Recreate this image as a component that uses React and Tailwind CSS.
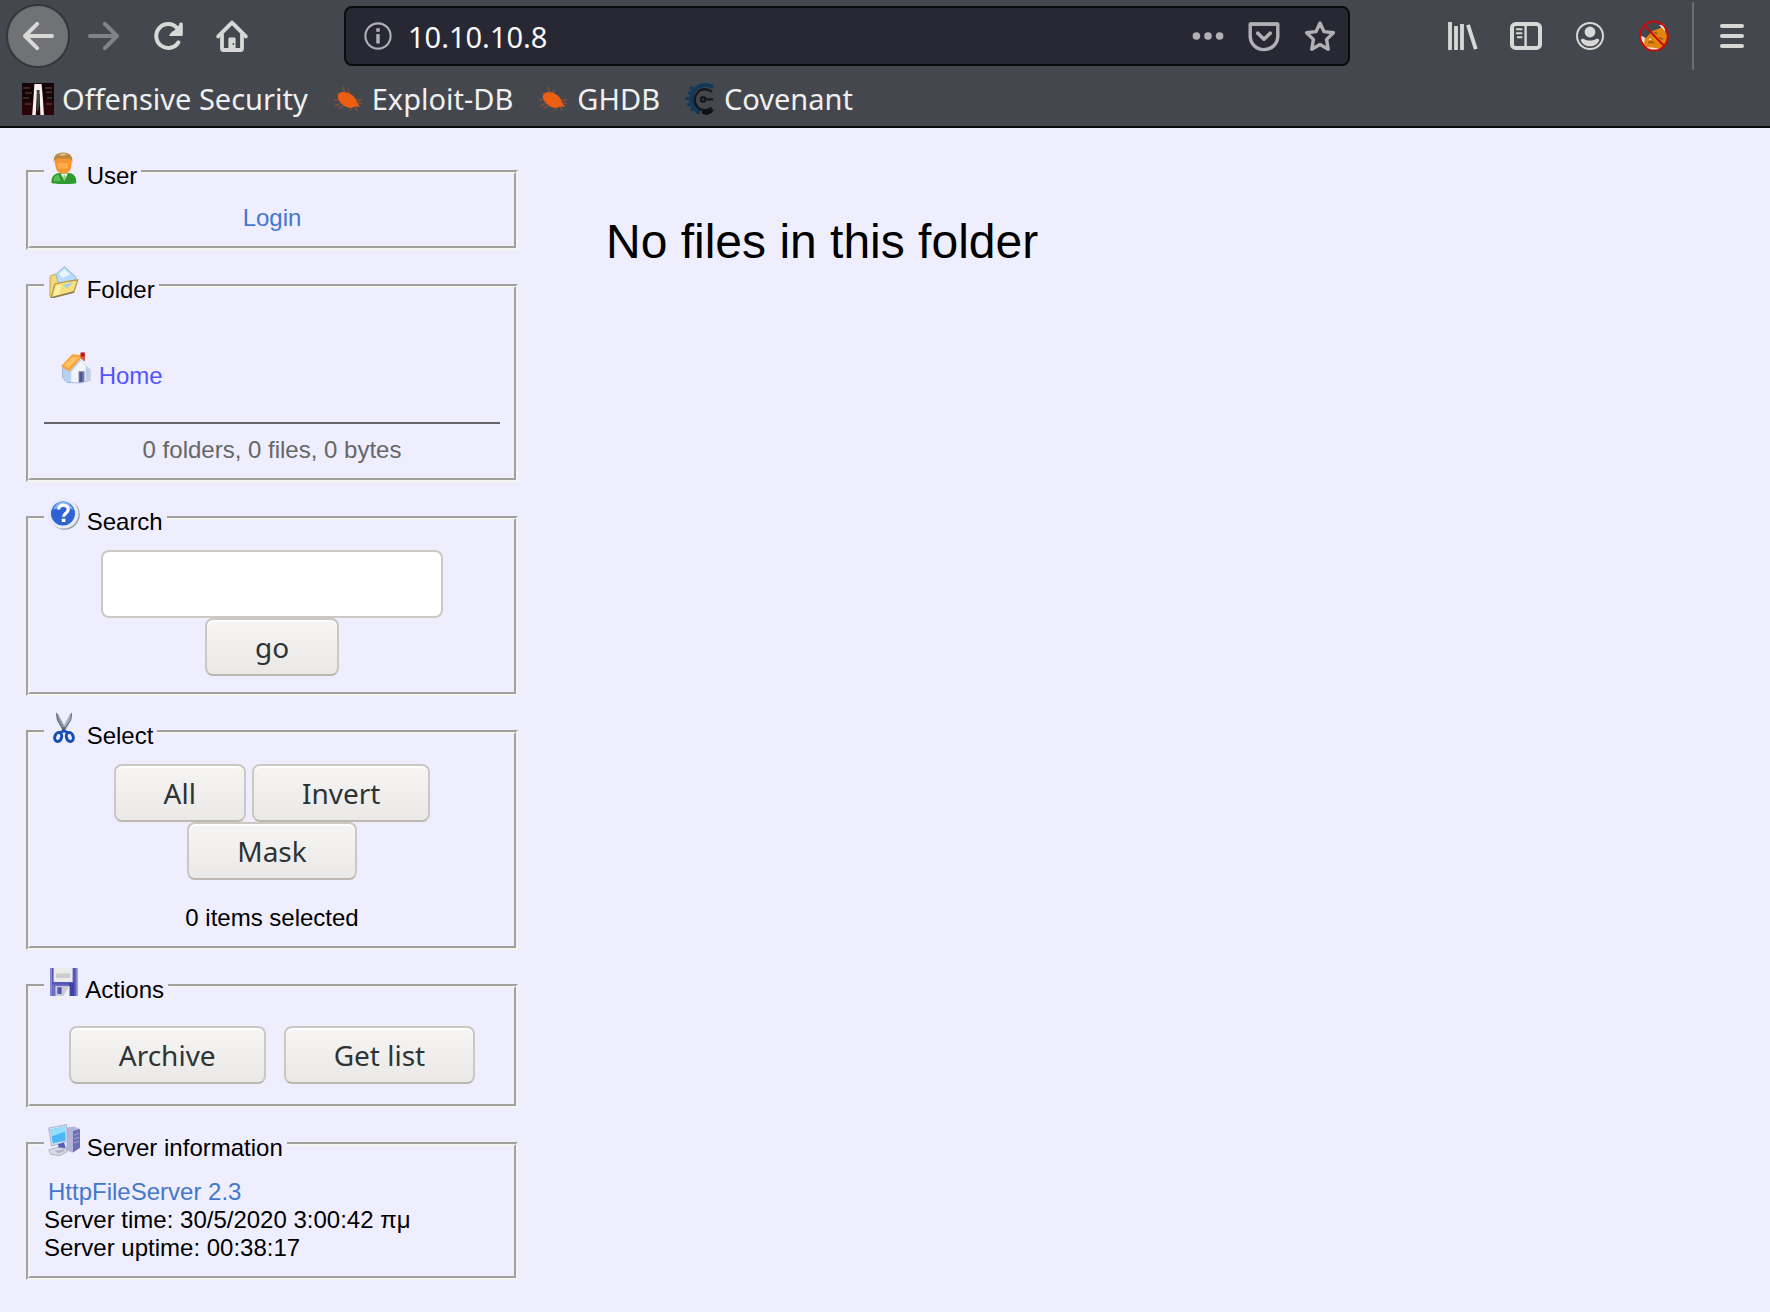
import React from "react";

function Svg({ children, className = "size-8 block shrink-0", box = "0 0 16 16" }) {
  return (
    <svg viewBox={box} className={className} fill="none" aria-hidden="true">
      {children}
    </svg>
  );
}

/* ---------- browser icons ---------- */

const BackArrow = () => (
  <Svg>
    <path d="M7.6 1.9 1.5 8l6.1 6.1M1.8 8H15" stroke="currentColor" strokeWidth="2" strokeLinecap="round" strokeLinejoin="round" />
  </Svg>
);

const ForwardArrow = () => (
  <Svg>
    <path d="M8.4 1.9 14.5 8l-6.1 6.1M14.2 8H1" stroke="currentColor" strokeWidth="2" strokeLinecap="round" strokeLinejoin="round" />
  </Svg>
);

const Reload = () => (
  <Svg>
    <path d="M13.2 11.2A6 6 0 1 1 12.6 4" stroke="currentColor" strokeWidth="2" strokeLinecap="round" />
    <path d="M15 1v6.3a.7.7 0 0 1-.7.7H8.6L15 1Z" fill="currentColor" />
    <path d="M15.4 1.8v5.4a.8.8 0 0 1-.8.8H9.2a.5.5 0 0 1-.4-.8l1.600-1.700 2 .3 1.100-1.100.1-2.900c0-.6 1.800-.6 1.800 0Z" fill="currentColor" />
  </Svg>
);

const HomeIcon = () => (
  <Svg>
    <path d="m1.1 8.2 6.9-6.900 6.900 6.900" stroke="currentColor" strokeWidth="1.900" strokeLinecap="round" strokeLinejoin="round" />
    <path d="M3 7v7.200a.8.8 0 0 0 .8.8h8.400a.8.8 0 0 0 .8-.8V7" stroke="currentColor" strokeWidth="1.900" />
    <path d="M6.200 15V9.400c0-.4.3-.7.7-.7h2.200c.4 0 .7.3.7.7V15Z" fill="currentColor" />
    <circle cx="8.700" cy="12" r=".45" fill="#45474c" />
    <path d="M3.900 15h8.200" stroke="currentColor" strokeWidth="1.600" />
  </Svg>
);

const Info = () => (
  <Svg className="size-7 block shrink-0">
    <circle cx="8" cy="8" r="7.200" stroke="currentColor" strokeWidth="1.200" />
    <rect x="7" y="3.600" width="2" height="2" fill="currentColor" />
    <rect x="7" y="6.900" width="2" height="5.400" fill="currentColor" />
  </Svg>
);

const Dots = () => (
  <Svg>
    <circle cx="2.200" cy="8" r="1.900" fill="currentColor" />
    <circle cx="8" cy="8" r="1.900" fill="currentColor" />
    <circle cx="13.800" cy="8" r="1.900" fill="currentColor" />
  </Svg>
);

const Pocket = () => (
  <Svg>
    <path d="M1.100 2h13.800v6c0 3.900-3.100 6.800-6.900 6.800S1.100 11.900 1.100 8V2Z" stroke="currentColor" strokeWidth="1.700" strokeLinejoin="round" />
    <path d="M1 1.300h14v1.600H1z" fill="currentColor" />
    <path d="M4.900 6.600 8 9.600l3.100-3" stroke="currentColor" strokeWidth="1.800" strokeLinecap="round" strokeLinejoin="round" />
  </Svg>
);

const Star = () => (
  <Svg>
    <path d="m8 1.500 2 4.300 4.700.6-3.400 3.300.8 4.900L8 12.300l-4.100 2.300.8-4.900L1.300 6.400 6 5.800 8 1.500Z" stroke="currentColor" strokeWidth="1.700" strokeLinejoin="round" />
  </Svg>
);

const Library = () => (
  <Svg>
    <path d="M2 1v14M5 3v12M8 2v13" stroke="currentColor" strokeWidth="1.900" />
    <path d="m11 2.400 3.900 12.200" stroke="currentColor" strokeWidth="1.900" />
  </Svg>
);

const Sidebars = () => (
  <Svg>
    <rect x="1" y="2" width="14" height="12" rx="1.800" stroke="currentColor" strokeWidth="2" />
    <path d="M7.800 2v12" stroke="currentColor" strokeWidth="1.200" />
    <path d="M3.400 4.600h2.400M3.400 6.600h2.400M3.900 8.600h1.900" stroke="currentColor" strokeWidth="1" strokeLinecap="round" />
  </Svg>
);

const Account = () => (
  <Svg>
    <circle cx="8" cy="8" r="6.500" stroke="currentColor" strokeWidth="1" />
    <circle cx="8" cy="6" r="2.700" fill="currentColor" />
    <path d="M3.400 10.200c0-.8.900-1 1.500-.7 1.900 1 4.300 1 6.200 0 .6-.3 1.500-.1 1.500.7-.8 1.900-2.500 2.900-4.600 2.900s-3.800-1-4.600-2.900Z" fill="currentColor" />
  </Svg>
);

const FoxBlocked = () => (
  <Svg>
    <path d="M2.200 8.600 4 9l3-3.400 3.600-1.300 2.200-1.500.7 2.700 1.200 2.300.2 2.500-1.600 2.700-3 1.500-4.600.1-2.800-2.200-.7-3.800Z" fill="#e2850f" />
    <path d="m1.500 7.900 1.900.9-.3 3.200L1.500 9.800ZM10.600 2.600l2.400-.7.600 4-1.500-1.900ZM4 13.600l3 .1 4 .7-2.200.9-3.200-.5ZM5.200 9.700l1.300-.6.200 1.200Z" fill="#ebe4e0" />
    <path d="m5.300 11.700 1.200-1 1.500.8M8 6.200l1.800.7M10.600 8.800l1.900.9M11 11.500l1.500.3" stroke="#8f5a12" strokeWidth=".8" />
    <ellipse cx="8" cy="8" rx="6.900" ry="7.300" stroke="#c80a0a" strokeWidth="1" />
    <path d="m3.200 2.800 10 10.300" stroke="#c80a0a" strokeWidth="1" />
  </Svg>
);

const MenuIcon = () => (
  <Svg className="h-8 w-7 block shrink-0" box="0 0 14 16">
    <path d="M2 3h10M2 8h10M2 13h10" stroke="currentColor" strokeWidth="2" strokeLinecap="round" />
  </Svg>
);

/* ---------- bookmark favicons ---------- */

const OffSecIcon = () => (
  <Svg>
    <rect width="16" height="16" fill="#150405" />
    <path d="M0 9h16v7H0z" fill="#2a0506" />
    <path d="M.5 2.500H4M1.500 5H5M11.500 2.500H15M12 4.600h3M.5 7.500h3M12.500 7.500H15M1.500 10.500h3M12 10.500h3" stroke="#4a3536" strokeWidth=".8" />
    <path d="M6.200.5h3.600l.5 5.500.7 10H9.200L8.800 5.500H7.400L6.900 16H5.100l.6-8 .5-7.500Z" fill="#f6f1ee" />
    <path d="M7.300 3.500h1.500v6.800L8.100 14h-.6l.1-5Z" fill="#3e4542" />
  </Svg>
);

const ExploitIcon = () => (
  <Svg>
    <path d="M2.500 5 5 6.300M5.500 2l.8 2.600M1 8.500l3.300-.3M3.500 12.800 6 11M1.300 11.600 4.800 10M9 13.800l1-2M12.600 13.800l-1.200-2.200M15.200 8.300l-3 .3M12.800 9.500l2.200 1M8.300 3.200v2.300" stroke="#84503a" strokeWidth=".7" />
    <path d="M2.900 6.600C3.200 4.700 5.500 4.100 7.600 4.800c2.600.9 4.500 2.600 4.900 5l1.500 2.100-2.500-.1c-1.800 1.100-3.900.7-5.700-.7-1.900-1.400-3-2.900-2.900-4.500Z" fill="#ec5f12" />
  </Svg>
);

const CovenantIcon = () => (
  <Svg>
    <path d="M14.600 2.200C12.600.8 10 .7 7.800 1.700c-2.900 1.300-4.300 4-4.100 7 .2 2.700 1.900 5 4.500 5.900" stroke="#13395a" strokeWidth="2" />
    <path d="M4.500 2.900 3 2.300M3.500 5.200 2 4.900M3 7.800H.6M3.300 10.500l-1.600.7M4.600 12.700l-1.200 1M7 14.500l-.6 1" stroke="#13395a" strokeWidth="1.600" />
    <path d="M13.900 4.400C11.800 2.700 8.800 2.600 7 4.500c-2.200 2.200-2.200 5.500-.2 7.600 1.900 2 4.800 2 7 .3" stroke="#17181d" strokeWidth="1.200" />
    <circle cx="9.600" cy="8.200" r="1.100" stroke="#17181d" strokeWidth="1.200" />
    <path d="M11 8.200h3.600" stroke="#17181d" strokeWidth="1.100" />
    <path d="m9 13.600 4.500-.5 1.500.3-1.300 1.700-2.500 1L9 15.200Z" fill="#101014" />
  </Svg>
);

/* ---------- page icons ---------- */

const inlineIcon = "inline-block size-8 align-baseline";

const UserIcon = () => (
  <Svg className={inlineIcon}>
    <path d="M1.800 15.600c-.3-2.400.6-4.300 3-5l3.200-.4 3.300.4c2.200.6 3.100 2.700 2.800 5-1.500.5-10.600.5-12.300 0Z" fill="#2f9a2f" />
    <path d="M2.800 14c.2-1.500 1-2.400 2.400-2.700l1.300 3.300H3Z" fill="#54c054" />
    <path d="m6.300 10.800 1.900 3.600 1.700-3.600Z" fill="#f2faf0" />
    <path d="M7.800 11.500h.8l.3 1.700-.7 1.400-.7-1.400Z" fill="#8fc98c" />
    <path d="M3.300 5c0-2 1.500-4 4.400-4s4.300 2 4.200 4l-.5 3.300c-.5 1.600-1.900 2.600-3.700 2.600S4.500 9.900 4 8.300L3.300 5Z" fill="#f79630" />
    <path d="M2.900 5.200C2.500 2 4.300.2 7.500.2s5.100 1.800 4.700 5c-.2-1.300-1-2-2.500-2-1.800 0-3 .1-4.300 0-1.500-.1-2.200.7-2.500 2Z" fill="#b98840" />
    <path d="M5.300 1.400c1.200-.9 3.300-.9 4.400-.1-1.300.7-3 .8-4.400.1Z" fill="#e0c08c" />
    <path d="M5 5.500h5v2.800H5z" fill="#ffab4e" />
  </Svg>
);

const FolderIcon = () => (
  <Svg className={inlineIcon}>
    <path d="M1 5.200 3.600 4l1.500.7L12 6.500l-9 9.100-2-.4Z" fill="#f0d878" stroke="#c9ab52" strokeWidth=".5" />
    <path d="M4 4.200 8.200.3l6 5.500L10 10.200 5 8Z" fill="#b9dcfa" stroke="#86b4e6" strokeWidth=".5" />
    <path d="m5.500 4 2.700-2.500L11 4.200 7 6Z" fill="#e8f5ff" />
    <path d="m3.500 9 5.400-1.200 6-.9-2 6.200L1.500 16Z" fill="#f7e07c" stroke="#b1954a" strokeWidth=".6" />
    <path d="m7.500 9.600 5-1.600-3 3.300Z" fill="#9dd0ef" />
    <path d="m4.300 10 2.300-.4-1 4.400-3 .7Z" fill="#fff1a8" />
    <path d="m12.900 13-11.400 3" stroke="#8b7c5c" strokeWidth=".7" />
  </Svg>
);

const HouseIcon = () => (
  <Svg className={inlineIcon}>
    <path d="m1.300 7.600 3.500 1.600 5-5.500 5.200 5.200v5.300l-5 1.300-6.600-.3-2.100-2.400Z" fill="#b5d3f1" stroke="#93abcf" strokeWidth=".4" />
    <path d="m5.600 10 4.900-5.900 4.400 5v5l-4.900 1.300-4.400-.4Z" fill="#f1f5fb" />
    <path d="M12.800 14.600V7l2.100 2.100v5Z" fill="#c0cde6" />
    <path d="M9.300 9.600h2.900v5.300l-2.900.5Z" fill="#6d77a8" />
    <path d="M9.900 10.300h1.100v4.500l-1.100.2Z" fill="#4c5684" />
    <path d="m.5 7.100 5.600-6 5.600.5L4.700 9.700Z" fill="#fba33e" />
    <path d="m2 6.700 4.300-4.500 3.300.3-5.200 5.500Z" fill="#ffbf62" />
    <path d="M10.300.9h2.200v3.800l-2.200-1.500Z" fill="#c9604c" />
    <path d="M10.300.2h2.100v2h-2.100Z" fill="#c2181a" />
  </Svg>
);

const HelpIcon = () => (
  <Svg className={inlineIcon}>
    <circle cx="8.300" cy="8.300" r="7.600" fill="#9a9aa6" />
    <circle cx="7.700" cy="7.700" r="7.600" fill="#e4ebf5" />
    <circle cx="7.500" cy="7.800" r="6" fill="#2f62d2" />
    <path d="M2.500 6C3.500 3 5.500 1.900 7.500 1.900s4.300 1.300 5 4.100C9 4 6 4 2.500 6Z" fill="#7fb2f2" />
    <path d="M5.300 5.800c0-1.500 1.100-2.200 2.400-2.200 1.400 0 2.400.8 2.400 2.100 0 1.900-2.300 1.900-2.300 3.700" stroke="#fff" strokeWidth="1.600" />
    <rect x="6.900" y="10.300" width="1.800" height="1.700" fill="#fff" />
  </Svg>
);

const ScissorsIcon = () => (
  <Svg className={inlineIcon}>
    <path d="m4 .3 1 .8 3.800 7-1.300 1.600L4.600 4.100Z" fill="#8793a3" />
    <path d="m12 .3-1 .8-3.800 7 1.300 1.600 2.900-5.600Z" fill="#a3aebb" />
    <path d="M4.300.6 4.700 4 8 9.500M11.800.6 11.400 4 8.300 8.500" stroke="#5f6b7b" strokeWidth=".5" />
    <path d="M7.900 7.500v2.800" stroke="#56657b" strokeWidth="1.400" />
    <ellipse cx="5.100" cy="12.500" rx="1.700" ry="2.300" transform="rotate(18 5.100 12.500)" stroke="#1450b4" strokeWidth="1.500" />
    <ellipse cx="10.900" cy="12.500" rx="1.700" ry="2.300" transform="rotate(-18 10.900 12.500)" stroke="#1450b4" strokeWidth="1.500" />
    <path d="m6 10.200 2-.8 2 .8" stroke="#1450b4" strokeWidth="1.200" />
  </Svg>
);

const FloppyIcon = () => (
  <Svg className={inlineIcon}>
    <path d="M1 1h13.700v14H1z" fill="#5658b8" />
    <path d="M1 1h1v14H1zM13.900 1h.8v14h-.8z" fill="#8587d2" />
    <path d="M2.800 1h9.500v7H2.800z" fill="#ebebeb" />
    <path d="M4 3.700h7V6H4z" fill="#cdcdcf" />
    <path d="M2 9.300h11V15H2z" fill="#6c6ec6" />
    <path d="M10.500 8.500H13V15h-2.500z" fill="#4042a8" />
    <path d="M3.700 10h7v5h-7z" fill="#c9c9d4" />
    <path d="M4.700 10.600h2.100v3.400H4.700z" fill="#5254b2" />
    <path d="M7.600 15 10.700 10v5Z" fill="#efeff3" />
  </Svg>
);

const ServerIcon = () => (
  <Svg className={inlineIcon}>
    <path d="m9.500 1.800 3.500-.6 3 1.300v9.400l-3.800 2.400-3-1Z" fill="#b4b5da" />
    <path d="m12.500 3.500 3.500-1v9.400l-3.500 2.300Z" fill="#6d6fb0" />
    <path d="m13 5.500 2.500-.8M13 7.500l2.500-.8M13 9.500l2.500-.9" stroke="#a6a8d8" strokeWidth=".5" />
    <path d="M.3 2 9.200.3l.6 8.400L1.800 11Z" fill="#d6dcee" stroke="#9fa9cc" strokeWidth=".4" />
    <path d="m1.200 2.700 7.200-1.500.5 7-6.500 1.600Z" fill="#4cb8f7" />
    <path d="m1.200 2.700 7.200-1.500.2 2.500-6.900 2.600Z" fill="#95dffc" />
    <path d="m5 10.100 3-.9.9 2.800-3.400.9Z" fill="#5260b4" />
    <path d="m.4 13 4-1.300 4.800.5.4 1.500L6 15.800l-4.600-.6Z" fill="#d9dbe6" stroke="#a2a5bf" strokeWidth=".4" />
    <path d="m3.200 13.300 4.500-.5.9.7-3.500 1.200Z" fill="#b2b5ca" />
  </Svg>
);

/* ---------- building blocks ---------- */

function ToolButton({ label, children, className = "" }) {
  return (
    <button type="button" aria-label={label} className={`flex items-center justify-center ${className}`}>
      {children}
    </button>
  );
}

function Bookmark({ icon, children }) {
  return (
    <a href="#" className="flex items-center gap-2">
      {icon}
      {children}
    </a>
  );
}

function Panel({ icon, title, children }) {
  return (
    <fieldset className="border-4 border-[#f4f4f0] px-3.5 pb-3.5 [border-style:groove]">
      <legend className="px-1 pb-0.5">
        {icon} {title}
      </legend>
      <div className="pt-3">{children}</div>
    </fieldset>
  );
}

function PushButton({ children }) {
  return (
    <button
      type="button"
      className="h-[58px] rounded-lg border-2 border-[#cdc7c2] border-b-[#bfb8b1] bg-linear-to-b from-[#f6f5f4] to-[#eae9e7] px-12 font-['Noto_Sans',sans-serif] text-[28px] leading-8 text-[#2e3436] shadow-[inset_0_2px_#ffffff]"
    >
      {children}
    </button>
  );
}

function BrowserBar() {
  return (
    <header className="border-b-2 border-[#0c0c0d] bg-[#44474d] font-['Noto_Sans',sans-serif] text-[29px] text-[#d8d8d6]">
      <div className="flex h-[72px] items-center pr-6 pl-1.5">
        <ToolButton label="Back" className="mr-0.5 size-16 rounded-full border-2 border-[#34363a] bg-[#717276]">
          <BackArrow />
        </ToolButton>
        <ToolButton label="Forward" className="w-16 text-[#828387]">
          <ForwardArrow />
        </ToolButton>
        <ToolButton label="Reload" className="w-16">
          <Reload />
        </ToolButton>
        <ToolButton label="Home" className="w-16">
          <HomeIcon />
        </ToolButton>
        <div className="mr-20 ml-20 flex h-15 min-w-0 flex-1 items-center rounded-lg border-2 border-[#0c0c0d] bg-[#272833] pr-3 pl-[18px] text-[#b1b1b5]">
          <Info />
          <input
            aria-label="Address"
            defaultValue="10.10.10.8"
            className="ml-4 min-w-0 flex-1 bg-transparent text-[#f9f9fa] outline-none"
          />
          <div className="flex items-center gap-6">
            <ToolButton label="Page actions">
              <Dots />
            </ToolButton>
            <ToolButton label="Save to Pocket">
              <Pocket />
            </ToolButton>
            <ToolButton label="Bookmark this page">
              <Star />
            </ToolButton>
          </div>
        </div>
        <ToolButton label="Library" className="w-16">
          <Library />
        </ToolButton>
        <ToolButton label="Sidebars" className="w-16">
          <Sidebars />
        </ToolButton>
        <ToolButton label="Account" className="w-16">
          <Account />
        </ToolButton>
        <ToolButton label="Proxy" className="w-16">
          <FoxBlocked />
        </ToolButton>
        <div className="ml-1.5 h-[68px] w-0.5 bg-[#6b6c70]" />
        <ToolButton label="Menu" className="ml-6">
          <MenuIcon />
        </ToolButton>
      </div>
      <nav className="flex h-[54px] items-center gap-6 pl-[22px] text-[#f0f0f1]">
        <Bookmark icon={<OffSecIcon />}>Offensive Security</Bookmark>
        <Bookmark icon={<ExploitIcon />}>Exploit-DB</Bookmark>
        <Bookmark icon={<ExploitIcon />}>GHDB</Bookmark>
        <Bookmark icon={<CovenantIcon />}>Covenant</Bookmark>
      </nav>
    </header>
  );
}

export default function App() {
  return (
    <div className="flex min-h-screen flex-col bg-[#eeeeff] font-['Liberation_Sans',Arial,sans-serif] text-2xl leading-7 text-black">
      <BrowserBar />
      <div className="flex flex-1">
        <aside className="flex w-[30%] shrink-0 flex-col gap-4 pt-6 pr-[13px] pb-6 pl-[26px]">
          <Panel icon={<UserIcon />} title="User">
            <div className="text-center">
              <a href="#" className="px-1 text-[#4477cc]">Login</a>
            </div>
          </Panel>

          <Panel icon={<FolderIcon />} title="Folder">
            <div className="px-4 pt-[34px] pb-8">
              <a href="#" className="text-[#5555ff]">
                <HouseIcon /> Home
              </a>
            </div>
            <hr className="mb-3 border-t-2 border-[#666666]" />
            <div className="text-center text-[#666666]">0 folders, 0 files, 0 bytes</div>
          </Panel>

          <Panel icon={<HelpIcon />} title="Search">
            <form className="flex flex-wrap justify-center pb-0.5" onSubmit={(e) => e.preventDefault()}>
              <input
                type="text"
                aria-label="Search"
                className="h-[68px] w-[342px] max-w-full rounded-lg border-2 border-[#cdc7c2] bg-white px-4"
              />
              <PushButton>go</PushButton>
            </form>
          </Panel>

          <Panel icon={<ScissorsIcon />} title="Select">
            <div className="flex flex-wrap justify-center gap-x-1.5">
              <PushButton>All</PushButton>
              <PushButton>Invert</PushButton>
              <PushButton>Mask</PushButton>
            </div>
            <div className="pt-6 text-center">0 items selected</div>
          </Panel>

          <Panel icon={<FloppyIcon />} title="Actions">
            <div className="flex flex-wrap justify-center gap-x-[18px] pt-2 pb-1.5">
              <PushButton>Archive</PushButton>
              <PushButton>Get list</PushButton>
            </div>
          </Panel>

          <Panel icon={<ServerIcon />} title="Server information">
            <div className="pt-0.5">
              <a href="#" className="px-1 text-[#4477cc]">HttpFileServer 2.3</a>
            </div>
            <div>Server time: 30/5/2020 3:00:42 πμ</div>
            <div>Server uptime: 00:38:17</div>
          </Panel>
        </aside>
        <main className="min-w-0 flex-1 pt-[86px] pl-[75px]">
          <h1 className="text-5xl leading-14">No files in this folder</h1>
        </main>
      </div>
    </div>
  );
}
